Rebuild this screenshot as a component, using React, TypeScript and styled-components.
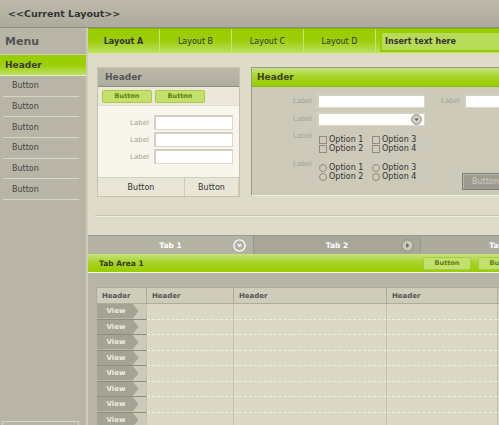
import React from 'react';
import styled, { createGlobalStyle } from 'styled-components';

const GlobalStyle = createGlobalStyle`
  html, body { margin: 0; padding: 0; }
  body {
    background: #dedbc9;
    font-family: "DejaVu Sans", Verdana, sans-serif;
    color: #333;
  }
  * { box-sizing: border-box; }
`;

const greenDown = 'linear-gradient(to bottom, #99cc00 0%, #9dcf0a 50%, #bde066 100%)';
const greenUp = 'linear-gradient(to bottom, #c6e380 0%, #a8d42a 45%, #99cc00 100%)';

const Frame = styled.div`
  width: 499px;
  height: 425px;
  overflow: hidden;
  display: flex;
  flex-direction: column;
`;

const TopBar = styled.header`
  flex: 0 0 28px;
  display: flex;
  align-items: center;
  padding-left: 8px;
  background: linear-gradient(to bottom, #bdbaac, #aeab9d);
  border-bottom: 1px solid #8c8a7c;
  font-size: 9.5px;
  font-weight: bold;
  color: #333;
`;

const Body = styled.div`
  flex: 1;
  display: flex;
  min-height: 0;
`;

const Sidebar = styled.nav`
  flex: 0 0 88px;
  display: flex;
  flex-direction: column;
  background: #b8b5a6;
  border-right: 2px solid #cfccbe;
`;

const MenuTitle = styled.div`
  flex: 0 0 27px;
  display: flex;
  align-items: center;
  padding-left: 5px;
  font-size: 11px;
  font-weight: bold;
  color: #555;
  border-bottom: 1px solid #d2d0c3;
`;

const SideHeader = styled.div`
  flex: 0 0 21px;
  display: flex;
  align-items: center;
  padding-left: 5px;
  background: ${greenDown};
  border-bottom: 1px solid #e2f0b8;
  font-size: 9px;
  font-weight: bold;
  color: #3a3d2c;
`;

const SideItem = styled.div`
  flex: 0 0 20.7px;
  margin: 0 7px 0 3px;
  padding-left: 9px;
  display: flex;
  align-items: center;
  border-bottom: 1px solid #d8d6ca;
  font-size: 8px;
  color: #444;
`;

const SideSpacer = styled.div`
  flex: 1;
`;

const SideFoot = styled.div`
  flex: 0 0 4px;
  margin: 0 7px 0 2px;
  border: 1px solid #d8d6ca;
  border-bottom: none;
`;

const Main = styled.main`
  flex: 0 0 480px;
  display: flex;
  flex-direction: column;
  min-height: 0;

  & > * {
    flex-shrink: 0;
  }
`;

const LayoutBar = styled.div`
  height: 26px;
  display: flex;
  align-items: center;
  background: ${greenDown};
  border-top: 1px solid #86b400;
  border-bottom: 1px solid #d4ea98;
`;

const LayoutTab = styled.div<{ $active?: boolean }>`
  width: 72px;
  height: 100%;
  display: flex;
  align-items: center;
  justify-content: center;
  border-right: 1px solid #c8e47e;
  font-size: 8px;
  font-weight: ${({ $active }) => ($active ? 'bold' : 'normal')};
  color: #333;
`;

const InsertBox = styled.div`
  width: 130px;
  height: 21px;
  margin-left: 4px;
  display: flex;
  align-items: center;
  padding-left: 3px;
  background: #b7db59;
  border: 2px solid #99cc00;
  font-size: 8px;
  font-weight: bold;
  color: #333;
`;

const Upper = styled.div`
  display: flex;
  align-items: flex-start;
  gap: 11px;
  padding: 13px 0 0 9px;
`;

const LeftPanel = styled.section`
  width: 143px;
  flex-shrink: 0;
  border: 1px solid #c5c2b0;
  background: #ebe8da;
`;

const GrayHead = styled.div`
  height: 19px;
  display: flex;
  align-items: center;
  padding-left: 7px;
  background: linear-gradient(to bottom, #bbb8a9, #b0ad9e);
  border-bottom: 1px solid #8f8d80;
  font-size: 9px;
  font-weight: bold;
  color: #555;
`;

const ButtonStrip = styled.div`
  height: 18px;
  display: flex;
  align-items: center;
  gap: 3px;
  padding-left: 4px;
`;

const GreenButton = styled.div<{ $width?: number }>`
  width: ${({ $width }) => $width ?? 50}px;
  height: 13px;
  flex-shrink: 0;
  display: flex;
  align-items: center;
  justify-content: center;
  background: #c3df6c;
  border: 1px solid #a9cb4b;
  border-radius: 2px;
  font-size: 6.5px;
  font-weight: bold;
  color: #5d7d12;
`;

const FormArea = styled.div`
  height: 72px;
  padding-top: 9px;
  display: flex;
  flex-direction: column;
  gap: 2px;
  background: #f8f6ec;
  border-top: 1px solid #e2dfd0;
`;

const FormLine = styled.div`
  display: flex;
  align-items: center;
`;

const SmallLabel = styled.span<{ $width: number }>`
  width: ${({ $width }) => $width}px;
  flex-shrink: 0;
  padding-right: 5px;
  text-align: right;
  font-size: 7px;
  color: #a4a293;
`;

const TextField = styled.div<{ $width: number; $height: number }>`
  width: ${({ $width }) => $width}px;
  height: ${({ $height }) => $height}px;
  flex-shrink: 0;
  display: flex;
  align-items: center;
  justify-content: flex-end;
  padding-right: 2px;
  background: #fff;
  border: 1px solid #d9d7cb;
  border-top: 2px solid #d2d0c2;
  border-left: 2px solid #d2d0c2;
`;

const FootRow = styled.div`
  display: flex;
  height: 19px;
  border-top: 1px solid #d3d0c0;
`;

const PlainButton = styled.div<{ $width?: number }>`
  flex: ${({ $width }) => ($width ? `0 0 ${$width}px` : '1')};
  display: flex;
  align-items: center;
  justify-content: center;
  background: #e9e6d7;
  border-right: 1px solid #cfccbb;
  font-size: 8px;
  color: #333;
`;

const RightPanel = styled.section`
  width: 300px;
  flex-shrink: 0;
  border: 1px solid;
  border-color: #9a9888 #efede2 #efede2 #9a9888;
  background: #cdcab9;
`;

const GreenHead = styled.div`
  height: 19px;
  display: flex;
  align-items: center;
  padding-left: 5px;
  background: ${greenUp};
  border-bottom: 1px solid #8cb800;
  font-size: 9px;
  font-weight: bold;
  color: #3b4418;
`;

const PanelBody = styled.div`
  padding: 7px 0 5px 0;
  display: flex;
  flex-direction: column;
`;

const FieldRow = styled.div<{ $gap: number; $top?: boolean }>`
  display: flex;
  align-items: ${({ $top }) => ($top ? 'flex-start' : 'center')};
  margin-top: ${({ $gap }) => $gap}px;
`;

const TopLabel = styled(SmallLabel)`
  line-height: 9px;
  margin-top: -3px;
`;

const SecondLabel = styled.span`
  margin-left: 16px;
  margin-right: 4px;
  font-size: 7px;
  color: #a4a293;
`;

const ChoiceGrid = styled.div`
  width: 103px;
  flex-shrink: 0;
  display: grid;
  grid-template-columns: 53px 50px;
  grid-auto-rows: 9px;
  padding-left: 2px;
`;

const Choice = styled.label`
  display: flex;
  align-items: center;
  gap: 2px;
  font-size: 8px;
  line-height: 9px;
  color: #333;
  white-space: nowrap;
`;

const Box = styled.span<{ $round?: boolean }>`
  width: 8px;
  height: 8px;
  flex-shrink: 0;
  border: 1px solid #8e8c7e;
  border-radius: ${({ $round }) => ($round ? '50%' : '0')};
`;

const GreyButton = styled.div`
  width: 60px;
  height: 17px;
  flex-shrink: 0;
  margin: 10px 0 0 42px;
  display: flex;
  align-items: center;
  padding-left: 9px;
  background: #9e9c92;
  border: 1px solid #7f7d72;
  border-right: none;
  box-shadow: inset 1px 1px 0 #b8b6ac;
  font-size: 8px;
  color: #cdcbc1;
`;

const Separator = styled.div`
  height: 2px;
  margin: 18px 0 0 7px;
  border-top: 1px solid #c6c3b1;
  border-bottom: 1px solid #efede2;
`;

const TabRow = styled.div`
  height: 19px;
  margin-top: 18px;
  display: flex;
  border-top: 1px solid #9c9a8c;
`;

const Tab = styled.div<{ $width: number; $shade: string }>`
  flex: 0 0 ${({ $width }) => $width}px;
  display: grid;
  grid-template-columns: 1fr auto 1fr;
  align-items: center;
  background: ${({ $shade }) => $shade};
  border-right: 1px solid #9a988a;
`;

const TabText = styled.span`
  grid-column: 2;
  font-size: 7.5px;
  font-weight: bold;
  color: #fff;
`;

const TabIcon = styled.svg<{ $right: number }>`
  grid-column: 3;
  justify-self: end;
  margin-right: ${({ $right }) => $right}px;
`;

const TabArea = styled.div`
  height: 19px;
  display: flex;
  align-items: center;
  padding-left: 11px;
  background: ${greenUp};
  border-bottom: 1px solid #f5f8ea;
`;

const TabAreaTitle = styled.span`
  flex: 0 0 324px;
  font-size: 7.5px;
  font-weight: bold;
  color: #333a1c;
`;

const ButtonGroup = styled.div`
  display: flex;
  gap: 7px;
`;

const TabBody = styled.div`
  flex: 1 1 auto;
  flex-shrink: 1 !important;
  min-height: 0;
  padding: 14px 0 0 8px;
  background: #b8b5a6;
`;

const Grid = styled.table`
  border-collapse: collapse;
  table-layout: fixed;
  width: 501px;
`;

const HeadCell = styled.th`
  height: 16px;
  padding: 0 5px;
  text-align: left;
  background: #cfccba;
  border: 1px solid #adab9c;
  font-size: 7px;
  font-weight: bold;
  color: #555;
`;

const BodyRow = styled.tr`
  height: 15.5px;
`;

const Cell = styled.td`
  padding: 0;
  background: #dbd8c5;
  border-right: 1px solid #c3c0af;
  border-bottom: 1px dashed #f1efe5;
`;

const ViewCell = styled.td`
  padding: 0;
  background: #cdcab7;
  border-bottom: 1px solid #8e8c7f;
  border-right: 1px solid #c3c0af;
`;

const ViewTag = styled.div`
  width: 42px;
  height: 14.5px;
  display: flex;
  align-items: center;
  padding-left: 10px;
  background: #a5a394;
  clip-path: polygon(0 0, 86% 0, 100% 50%, 86% 100%, 0 100%);
  font-size: 7px;
  font-weight: bold;
  color: #efede2;
`;

const DropIcon = () => (
  <svg width="11" height="11" viewBox="0 0 11 11">
    <circle cx="5.5" cy="5.5" r="4.8" fill="#d3d0c4" stroke="#7d7b70" strokeWidth="0.9" />
    <polygon points="3.3,4.4 7.7,4.4 5.5,7" fill="#5f5d54" />
  </svg>
);

const columns = [50, 87, 153, 111, 100];
const rows = Array.from({ length: 8 }, (_, i) => i);
const options = ['Option 1', 'Option 3', 'Option 2', 'Option 4'];

const App: React.FC = () => {
  return (
    <>
      <GlobalStyle />
      <Frame>
        <TopBar>&lt;&lt;Current Layout&gt;&gt;</TopBar>
        <Body>
          <Sidebar>
            <MenuTitle>Menu</MenuTitle>
            <SideHeader>Header</SideHeader>
            {[0, 1, 2, 3, 4, 5].map((i) => (
              <SideItem key={i}>Button</SideItem>
            ))}
            <SideSpacer />
            <SideFoot />
          </Sidebar>
          <Main>
            <LayoutBar>
              <LayoutTab $active>Layout A</LayoutTab>
              <LayoutTab>Layout B</LayoutTab>
              <LayoutTab>Layout C</LayoutTab>
              <LayoutTab>Layout D</LayoutTab>
              <InsertBox>Insert text here</InsertBox>
            </LayoutBar>

            <Upper>
              <LeftPanel>
                <GrayHead>Header</GrayHead>
                <ButtonStrip>
                  <GreenButton>Button</GreenButton>
                  <GreenButton>Button</GreenButton>
                </ButtonStrip>
                <FormArea>
                  {[0, 1, 2].map((i) => (
                    <FormLine key={i}>
                      <SmallLabel $width={56}>Label</SmallLabel>
                      <TextField $width={79} $height={15} />
                    </FormLine>
                  ))}
                </FormArea>
                <FootRow>
                  <PlainButton $width={87}>Button</PlainButton>
                  <PlainButton>Button</PlainButton>
                </FootRow>
              </LeftPanel>

              <RightPanel>
                <GreenHead>Header</GreenHead>
                <PanelBody>
                  <FieldRow $gap={0}>
                    <SmallLabel $width={65}>Label</SmallLabel>
                    <TextField $width={108} $height={14} />
                    <SecondLabel>Label</SecondLabel>
                    <TextField $width={80} $height={14} />
                  </FieldRow>
                  <FieldRow $gap={4}>
                    <SmallLabel $width={65}>Label</SmallLabel>
                    <TextField $width={108} $height={14}>
                      <DropIcon />
                    </TextField>
                  </FieldRow>
                  <FieldRow $gap={9} $top>
                    <TopLabel $width={65}>Label</TopLabel>
                    <ChoiceGrid>
                      {options.map((o) => (
                        <Choice key={o}>
                          <Box />
                          {o}
                        </Choice>
                      ))}
                    </ChoiceGrid>
                  </FieldRow>
                  <FieldRow $gap={10} $top>
                    <TopLabel $width={65}>Label</TopLabel>
                    <ChoiceGrid>
                      {options.map((o) => (
                        <Choice key={o}>
                          <Box $round />
                          {o}
                        </Choice>
                      ))}
                    </ChoiceGrid>
                    <GreyButton>Button</GreyButton>
                  </FieldRow>
                </PanelBody>
              </RightPanel>
            </Upper>

            <Separator />

            <TabRow>
              <Tab $width={166} $shade="#b5b2a4">
                <TabText>Tab 1</TabText>
                <TabIcon $right={7} width="13" height="13" viewBox="0 0 13 13">
                  <circle cx="6.5" cy="6.5" r="5.6" fill="none" stroke="#fff" strokeWidth="1.2" />
                  <polygon points="4,5.2 9,5.2 6.5,8.2" fill="#fff" />
                </TabIcon>
              </Tab>
              <Tab $width={167} $shade="#a9a699">
                <TabText>Tab 2</TabText>
                <TabIcon $right={6} width="13" height="13" viewBox="0 0 13 13">
                  <circle cx="6.5" cy="6.5" r="5.6" fill="#cbc8ba" stroke="#8a887b" strokeWidth="1" />
                  <polygon points="5.3,4 8.3,6.5 5.3,9" fill="#66645a" />
                </TabIcon>
              </Tab>
              <Tab $width={160} $shade="#aeab9d">
                <TabText>Tab 3</TabText>
              </Tab>
            </TabRow>

            <TabArea>
              <TabAreaTitle>Tab Area 1</TabAreaTitle>
              <ButtonGroup>
                <GreenButton $width={48}>Button</GreenButton>
                <GreenButton $width={48}>Button</GreenButton>
              </ButtonGroup>
            </TabArea>

            <TabBody>
              <Grid>
                <colgroup>
                  {columns.map((w, i) => (
                    <col key={i} style={{ width: w }} />
                  ))}
                </colgroup>
                <thead>
                  <tr>
                    {columns.map((_, i) => (
                      <HeadCell key={i}>Header</HeadCell>
                    ))}
                  </tr>
                </thead>
                <tbody>
                  {rows.map((r) => (
                    <BodyRow key={r}>
                      <ViewCell>
                        <ViewTag>View</ViewTag>
                      </ViewCell>
                      {columns.slice(1).map((_, i) => (
                        <Cell key={i} />
                      ))}
                    </BodyRow>
                  ))}
                </tbody>
              </Grid>
            </TabBody>
          </Main>
        </Body>
      </Frame>
    </>
  );
};

export default App;
